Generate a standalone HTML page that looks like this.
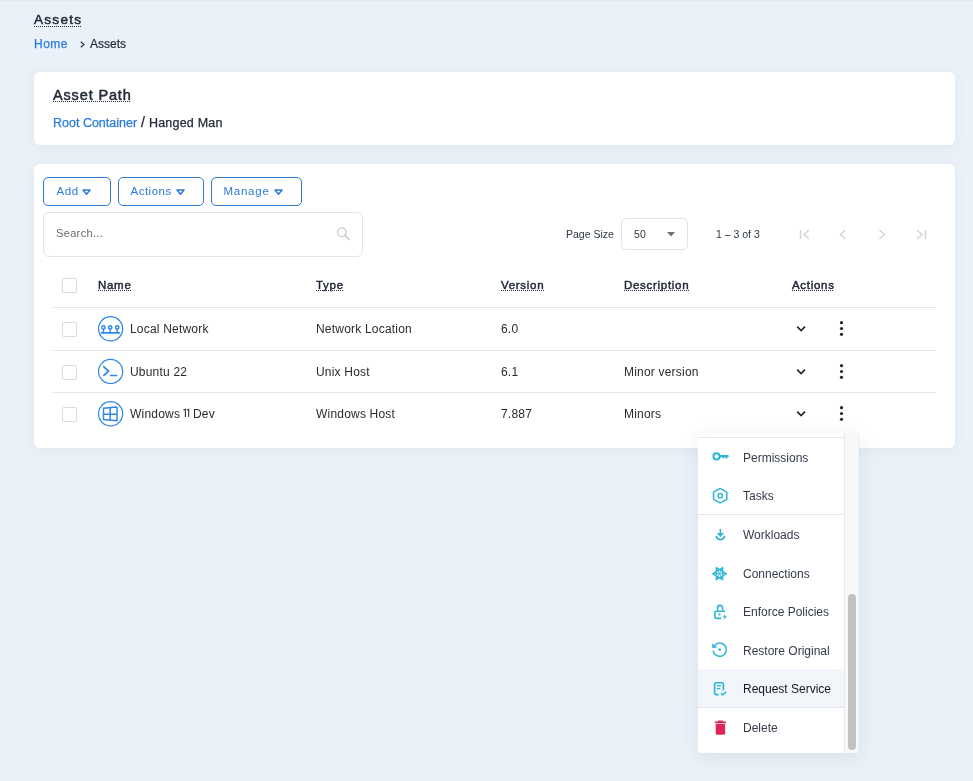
<!DOCTYPE html>
<html>
<head>
<meta charset="utf-8">
<style>
*{box-sizing:border-box;margin:0;padding:0}
html,body{width:973px;height:781px;overflow:hidden}
body{-webkit-font-smoothing:antialiased;background:#EBF1F8;font-family:"Liberation Sans",sans-serif;color:#232B3A;position:relative}
.abs{position:absolute;white-space:nowrap}
.dot::after{content:"";position:absolute;left:0;right:var(--ur,0px);bottom:var(--ub,1px);height:1px;background-image:linear-gradient(to right,#232B3A 50%,transparent 50%);background-size:2px 1px;background-repeat:repeat-x}
.card{position:absolute;background:#fff;border-radius:6px;box-shadow:0 2px 14px rgba(40,60,90,0.06)}
.btn{position:absolute;top:177px;height:29px;border:1px solid #2F7AD3;border-radius:5px;color:#2C7AD6;font-size:11.5px;letter-spacing:0.2px}
.btn span{position:absolute;top:7px}
.btn svg{position:absolute;top:10.5px}
.th{font-weight:normal;-webkit-text-stroke:0.45px #1C2434;font-size:11.5px;top:279px;letter-spacing:0.7px;color:#1C2434;--ub:0px;--ur:0.7px}
.td{font-size:12px;color:#2B2B2B;letter-spacing:0.2px}
.cb{position:absolute;left:62px;width:15px;height:15px;border:1px solid #D3DBE6;border-radius:2px;background:#fff}
.sep{position:absolute;left:53px;width:883px;height:1px;background:#DFE6EE}
.ic{position:absolute;left:98px;width:26px;height:26px}
.menu{position:absolute;left:698px;top:433px;width:161px;height:320px;background:#fff;border-radius:0 0 0 4px;box-shadow:0 4px 20px rgba(30,50,80,0.085);overflow:hidden}
.mi{position:absolute;left:0;width:146px;height:38px}
.ml{position:absolute;left:45px;font-size:12px;color:#343B4A;white-space:nowrap}
.mi svg{position:absolute;left:13px}
</style>
</head>
<body>
<div id="root" style="position:absolute;left:0;top:0;width:973px;height:781px;overflow:hidden;will-change:transform;background:#EBF1F8">
<div style="position:absolute;left:0;top:0;width:973px;height:2px;background:linear-gradient(#E2E8F0,#EBF1F8)"></div>

<div class="abs dot" style="left:34px;top:12px;font-size:13.5px;-webkit-text-stroke:0.5px #232B3A;letter-spacing:1.3px;--ub:0px;--ur:1.3px">Assets</div>
<div class="abs" style="left:34px;top:37px;font-size:12px;letter-spacing:0.5px;color:#2A7CDB;-webkit-text-stroke:0.25px #2A7CDB">Home</div>
<svg style="position:absolute;left:80px;top:41px" width="5" height="7" viewBox="0 0 5 7"><path d="M0.8 0.8 L4 3.5 L0.8 6.2" fill="none" stroke="#2D3646" stroke-width="1.2"/></svg>
<div class="abs" style="left:90px;top:37px;font-size:12px;-webkit-text-stroke:0.2px #232B3A">Assets</div>

<div class="card" style="left:34px;top:72px;width:921px;height:73px">
  <div class="abs dot" style="left:19px;top:15px;font-size:14.5px;-webkit-text-stroke:0.5px #232B3A;letter-spacing:0.85px;--ur:0.85px">Asset Path</div>
  <div class="abs" style="left:19px;top:42px;font-size:12.5px;color:#222A38;-webkit-text-stroke:0.25px currentColor"><span style="color:#2A7CDB">Root Container</span><span style="margin-left:4px;font-size:14px;position:relative;top:-0.5px">/</span><span style="margin-left:4px;letter-spacing:0.2px">Hanged Man</span></div>
</div>

<div class="card" style="left:34px;top:164px;width:921px;height:284px"></div>

<div class="btn" style="left:43px;width:68px"><span style="left:12.5px;letter-spacing:0.6px">Add</span>
<svg style="left:38.3px" width="9" height="7" viewBox="0 0 9 7"><path d="M1 1.1 H8 L4.5 5.3 Z" fill="none" stroke="#2C7AD6" stroke-width="1.5" stroke-linejoin="round"/></svg></div>
<div class="btn" style="left:118px;width:86px"><span style="left:11.5px;letter-spacing:0.5px">Actions</span>
<svg style="left:56.5px" width="9" height="7" viewBox="0 0 9 7"><path d="M1 1.1 H8 L4.5 5.3 Z" fill="none" stroke="#2C7AD6" stroke-width="1.5" stroke-linejoin="round"/></svg></div>
<div class="btn" style="left:211px;width:91px"><span style="left:11.5px;letter-spacing:0.75px">Manage</span>
<svg style="left:61.5px" width="9" height="7" viewBox="0 0 9 7"><path d="M1 1.1 H8 L4.5 5.3 Z" fill="none" stroke="#2C7AD6" stroke-width="1.5" stroke-linejoin="round"/></svg></div>

<div style="position:absolute;left:43px;top:212px;width:320px;height:45px;border:1px solid #DEE4EC;border-radius:6px"></div>
<div class="abs" style="left:56px;top:227px;font-size:11px;letter-spacing:0.35px;color:#666A70">Search...</div>
<svg style="position:absolute;left:335px;top:226px" width="16" height="16" viewBox="0 0 16 16"><circle cx="6.9" cy="6.2" r="4.3" fill="none" stroke="#C9CACC" stroke-width="1.3"/><path d="M10 9.4 L14.3 13.8" stroke="#C9CACC" stroke-width="1.5" stroke-linecap="round"/></svg>

<div class="abs" style="left:566px;top:228px;font-size:10.5px;color:#2D3646">Page Size</div>
<div style="position:absolute;left:621px;top:218px;width:67px;height:32px;border:1px solid #DEE4EC;border-radius:5px;background:#fff"></div>
<div class="abs" style="left:634px;top:227.5px;font-size:10.5px;letter-spacing:0.2px;color:#2D3646">50</div>
<svg style="position:absolute;left:667px;top:232px" width="8" height="5" viewBox="0 0 8 5"><path d="M0 0 L8 0 L4 4.5 Z" fill="#707070"/></svg>
<div class="abs" style="left:716px;top:228px;font-size:10.5px;color:#2D3646">1 – 3 of 3</div>

<svg style="position:absolute;left:798px;top:228px" width="14" height="13" viewBox="0 0 14 13"><path d="M2.5 2 V11" stroke="#D4D4D4" stroke-width="1.5"/><path d="M11 2 L6 6.5 L11 11" fill="none" stroke="#D4D4D4" stroke-width="1.5"/></svg>
<svg style="position:absolute;left:837px;top:228px" width="12" height="13" viewBox="0 0 12 13"><path d="M8.5 2 L3.5 6.5 L8.5 11" fill="none" stroke="#D4D4D4" stroke-width="1.5"/></svg>
<svg style="position:absolute;left:876px;top:228px" width="12" height="13" viewBox="0 0 12 13"><path d="M3.5 2 L8.5 6.5 L3.5 11" fill="none" stroke="#D4D4D4" stroke-width="1.5"/></svg>
<svg style="position:absolute;left:914px;top:228px" width="14" height="13" viewBox="0 0 14 13"><path d="M3 2 L8 6.5 L3 11" fill="none" stroke="#D4D4D4" stroke-width="1.5"/><path d="M11.5 2 V11" stroke="#D4D4D4" stroke-width="1.5"/></svg>

<!-- table header -->
<div class="cb" style="top:278px"></div>
<div class="abs th dot" style="left:98px">Name</div>
<div class="abs th dot" style="left:316px">Type</div>
<div class="abs th dot" style="left:501px">Version</div>
<div class="abs th dot" style="left:624px">Description</div>
<div class="abs th dot" style="left:792px">Actions</div>
<div class="sep" style="top:307px"></div>
<div class="sep" style="top:350px"></div>
<div class="sep" style="top:392px"></div>

<!-- rows -->
<div class="cb" style="top:322px"></div>
<div class="cb" style="top:365px"></div>
<div class="cb" style="top:407px"></div>

<!-- row icons -->
<svg class="ic" style="top:316px" viewBox="0 0 26 26"><circle cx="12.6" cy="12.8" r="12.1" fill="none" stroke="#2F86EB" stroke-width="1.25"/>
<g fill="none" stroke="#2F86EB" stroke-width="1.5"><circle cx="5.5" cy="11.4" r="1.65"/><circle cx="12.2" cy="11.4" r="1.65"/><circle cx="19.2" cy="11.4" r="1.65"/></g><path d="M5.5 13.1 V16.5 M12.2 13.1 V16.5 M19.2 13.1 V16.5" stroke="#2F86EB" stroke-width="1.4"/><path d="M3.4 16.8 H21.4" stroke="#2F86EB" stroke-width="1.7" stroke-linecap="round"/></svg>
<svg class="ic" style="top:358px" viewBox="0 0 26 26"><circle cx="12.6" cy="13.4" r="12.1" fill="none" stroke="#2F86EB" stroke-width="1.25"/>
<g fill="none" stroke="#2F86EB" stroke-linecap="round" stroke-linejoin="round"><path d="M5.9 8.9 L10.6 13.2 L5.9 17.4" stroke-width="1.75"/><path d="M12.5 17.4 H18.7" stroke-width="1.5"/></g></svg>
<svg class="ic" style="top:401px" viewBox="0 0 26 26"><circle cx="12.6" cy="12.8" r="12.1" fill="none" stroke="#2F86EB" stroke-width="1.25"/>
<g fill="none" stroke="#2F86EB" stroke-width="1.5" stroke-linejoin="round"><path d="M5.5 7.3 L18 5.9 A1 1 0 0 1 19 6.9 V19.7 L5.5 18.6 Z"/><path d="M12.2 6.6 V19.2 M5.5 13.2 H19"/></g></svg>

<div class="abs td" style="left:130px;top:322px">Local Network</div>
<div class="abs td" style="left:130px;top:365px">Ubuntu 22</div>
<div class="abs td" style="left:130px;top:407px">Windows</div><svg style="position:absolute;left:182px;top:407px" width="9" height="12" viewBox="182 407 9 12"><path d="M183.5 410 L185.4 409.3 V416.9 M186.9 410 L188.7 409.3 V416.9" fill="none" stroke="#333" stroke-width="1.1"/></svg><div class="abs td" style="left:193px;top:407px">Dev</div>
<div class="abs td" style="left:316px;top:322px">Network Location</div>
<div class="abs td" style="left:316px;top:365px">Unix Host</div>
<div class="abs td" style="left:316px;top:407px">Windows Host</div>
<div class="abs td" style="left:501px;top:322px">6.0</div>
<div class="abs td" style="left:501px;top:365px">6.1</div>
<div class="abs td" style="left:501px;top:407px">7.887</div>
<div class="abs td" style="left:624px;top:365px">Minor version</div>
<div class="abs td" style="left:624px;top:407px">Minors</div>

<!-- action icons -->
<svg style="position:absolute;left:795px;top:322px" width="12" height="12" viewBox="0 0 12 12"><path d="M2.2 4.7 L6.1 8.5 L10 4.7" fill="none" stroke="#1E2533" stroke-width="1.65"/></svg>
<svg style="position:absolute;left:795px;top:365px" width="12" height="12" viewBox="0 0 12 12"><path d="M2.2 4.7 L6.1 8.5 L10 4.7" fill="none" stroke="#1E2533" stroke-width="1.65"/></svg>
<svg style="position:absolute;left:795px;top:407px" width="12" height="12" viewBox="0 0 12 12"><path d="M2.2 4.7 L6.1 8.5 L10 4.7" fill="none" stroke="#1E2533" stroke-width="1.65"/></svg>
<svg style="position:absolute;left:838px;top:320px" width="7" height="17" viewBox="0 0 7 17"><g fill="#1E2533"><circle cx="3.5" cy="2.7" r="1.6"/><circle cx="3.5" cy="8.5" r="1.6"/><circle cx="3.5" cy="14.3" r="1.6"/></g></svg>
<svg style="position:absolute;left:838px;top:363px" width="7" height="17" viewBox="0 0 7 17"><g fill="#1E2533"><circle cx="3.5" cy="2.7" r="1.6"/><circle cx="3.5" cy="8.5" r="1.6"/><circle cx="3.5" cy="14.3" r="1.6"/></g></svg>
<svg style="position:absolute;left:838px;top:405px" width="7" height="17" viewBox="0 0 7 17"><g fill="#1E2533"><circle cx="3.5" cy="2.7" r="1.6"/><circle cx="3.5" cy="8.5" r="1.6"/><circle cx="3.5" cy="14.3" r="1.6"/></g></svg>

<!-- dropdown menu -->
<div class="menu">
  <div style="position:absolute;left:0;top:4px;width:146px;height:1px;background:#E1E7EE"></div>
  <div style="position:absolute;left:0;top:81px;width:146px;height:1px;background:#E1E7EE"></div>
  <div style="position:absolute;left:0;top:236px;width:146px;height:38px;background:#F2F6FA"></div>
  <div style="position:absolute;left:0;top:274px;width:146px;height:1px;background:#E1E7EE"></div>
  <span class="ml" style="top:18px">Permissions</span>
  <span class="ml" style="top:56px">Tasks</span>
  <span class="ml" style="top:95px">Workloads</span>
  <span class="ml" style="top:134px">Connections</span>
  <span class="ml" style="top:172px">Enforce Policies</span>
  <span class="ml" style="top:211px">Restore Original</span>
  <span class="ml" style="top:249px;color:#111822">Request Service</span>
  <span class="ml" style="top:288px">Delete</span>
  <svg style="position:absolute;left:0;top:0" width="146" height="320" viewBox="698 433 146 320">
    <g fill="none" stroke="#29B5D3" stroke-linejoin="round">
      <circle cx="716.5" cy="456.4" r="3.1" stroke-width="1.9"/>
      <path d="M720.2 488.45 L726.85 492.1 V499.3 L720.2 502.95 L713.55 499.3 V492.1 Z" stroke-width="1.5"/>
      <circle cx="720.2" cy="495.7" r="2.15" stroke-width="1.4"/>
      <path d="M720.4 529.4 V533.6" stroke-width="1.5" stroke-linecap="round"/>
      <path d="M716.3 536.6 A4.3 4.3 0 0 0 724.5 536.6" stroke-width="1.7" stroke-linecap="round"/>
      <path d="M717.6 610.6 V607.9 A2.5 2.5 0 0 1 722.6 607.9 V610.6" stroke-width="1.6"/>
      <path d="M725 611.3 H716.2 A1.3 1.3 0 0 0 714.9 612.6 V617.1 A1.3 1.3 0 0 0 716.2 618.4 H721" stroke-width="1.6"/>
      <path d="M714.6 645.4 A6.65 6.65 0 1 1 713.1 650.6" stroke-width="1.5"/>
      <path d="M718.6 694.6 H716.2 A1.6 1.6 0 0 1 714.6 693 V684.4 A1.6 1.6 0 0 1 716.2 682.8 H721.8 A1.6 1.6 0 0 1 723.4 684.4 V690.6" stroke-width="1.6"/>
      <path d="M717.2 685.8 H720.75 M717.2 688.6 H719.8" stroke-width="1.3" stroke-linecap="round"/>
      <path d="M721.3 693.6 L722.6 695.1 L725.8 692" stroke-width="1.4" stroke-linecap="round"/>
      <g stroke-width="1.3">
        <path d="M716.3 567.6 L726.4 573.7 L716.3 579.8 Z"/>
        <path d="M722.7 567.6 L712.6 573.7 L722.7 579.8 Z"/>
        <path d="M716.3 567.6 L722.7 579.8 M722.7 567.6 L716.3 579.8 M712.6 573.7 H726.4" stroke-width="0.9"/>
      </g>
    </g>
    <g fill="#29B5D3">
      <path d="M719.3 454.9 H727.9 L729.2 456.1 L727.9 457.3 H727.5 L726.3 459.1 L725.2 457.3 H724.5 L723.3 459.1 L722.2 457.3 H719.3 Z"/>
      <path d="M716.8 533.1 H724 L720.4 537 Z"/>
      <circle cx="719.5" cy="614.4" r="1.05"/>
      <path d="M725.3 613.9 L722.8 617.3 H724.6 L724.1 620 L726.9 616.3 H725.1 Z"/>
      <path d="M712.2 643.2 L712.3 648.1 L717.3 647.6 Z"/>
      <circle cx="719.7" cy="649.6" r="1.3"/>
    </g>
    <g fill="#E0245A">
      <path d="M718.2 720.4 H722.8 L723.3 721.5 H726 V723.2 H714.8 V721.5 H717.7 Z"/>
      <path d="M715.7 724 H725.1 V733.2 A1.6 1.6 0 0 1 723.5 734.8 H717.3 A1.6 1.6 0 0 1 715.7 733.2 Z"/>
    </g>
  </svg>
  <div style="position:absolute;left:146px;top:0;width:15px;height:320px;background:#F8F8F8;border-left:1px solid #E8E8E8;border-right:1px solid #F0F0F0"></div>
  <div style="position:absolute;left:150px;top:161px;width:8px;height:156px;background:#C1C1C1;border-radius:4px"></div>
</div>

</div>
</body>
</html>
